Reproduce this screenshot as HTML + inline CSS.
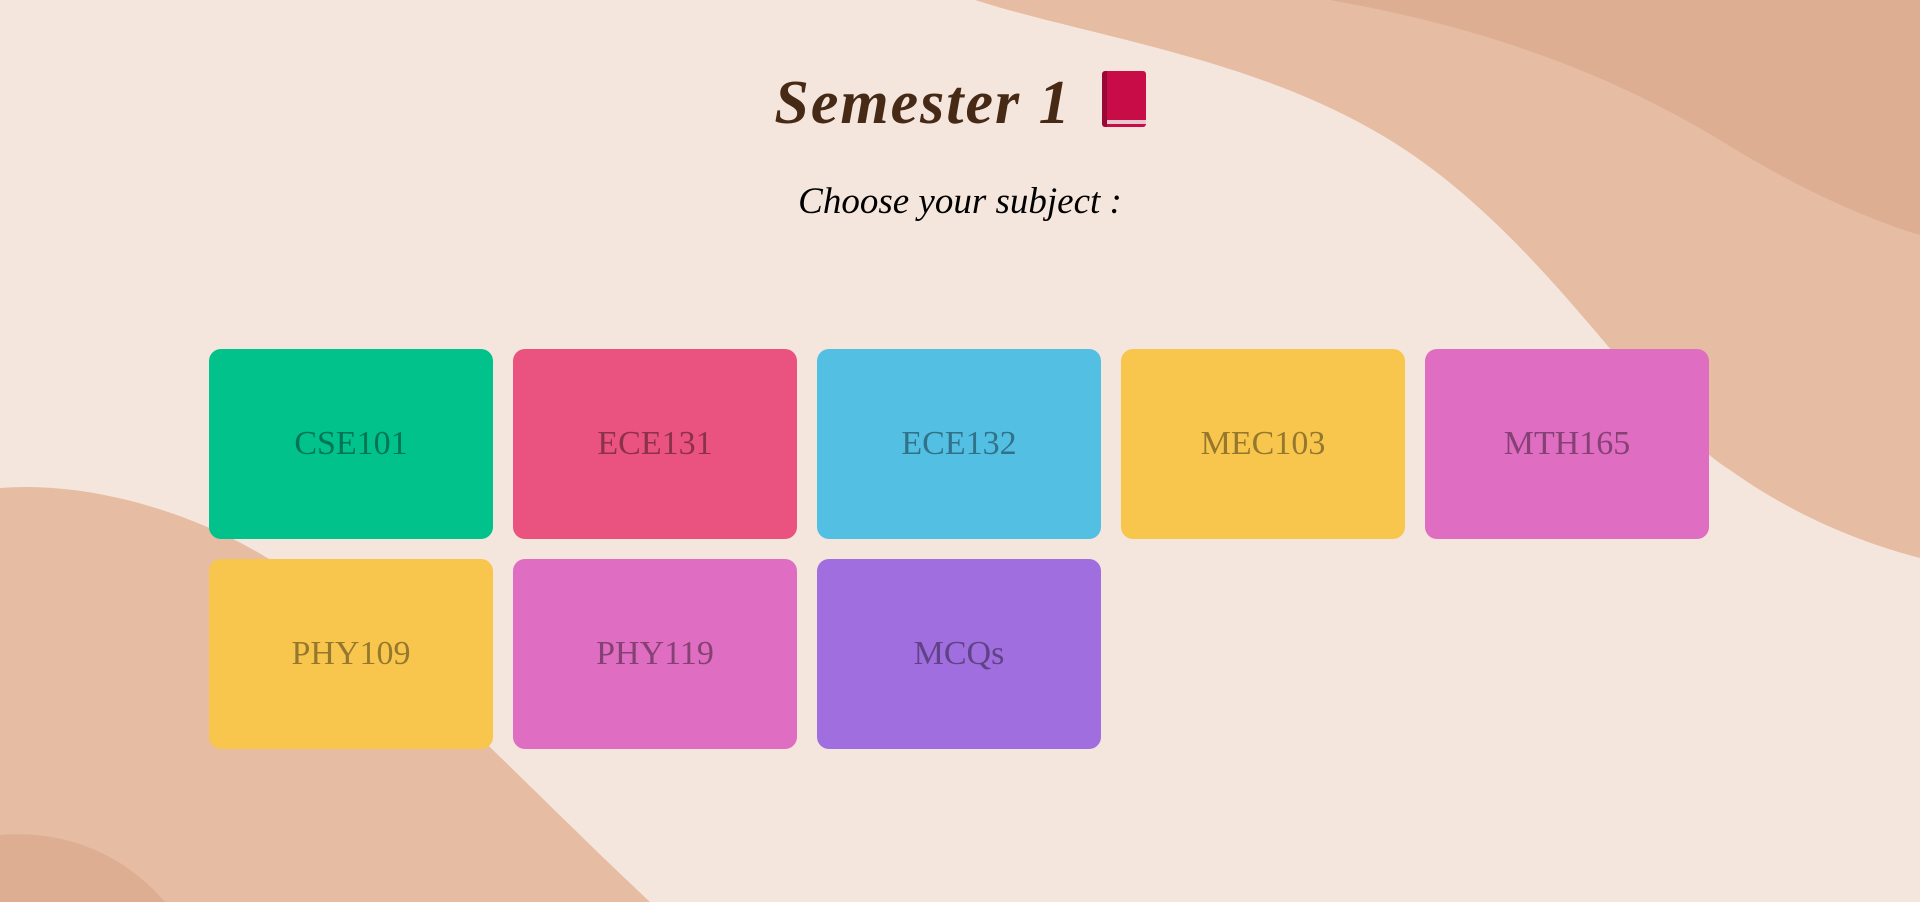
<!DOCTYPE html>
<html><head><meta charset="utf-8"><style>
html,body{margin:0;padding:0;width:1920px;height:902px;overflow:hidden;background:#f5e6dd;}
svg.bg{position:absolute;left:0;top:0;}
h1{position:absolute;left:0;right:0;top:68px;margin:0;text-align:center;font:italic bold 62px "Liberation Serif",serif;color:#472a16;letter-spacing:2px;}
.book{display:inline-block;width:44px;height:56px;background:#c80c48;border-radius:3px;vertical-align:-4px;margin-left:30px;position:relative;border-left:5px solid #9a0838;box-sizing:border-box;}
.book:after{content:"";position:absolute;left:0;right:0;bottom:3px;height:4px;background:#e8c8d0;}
h2{position:absolute;left:0;right:0;top:180px;margin:0;text-align:center;font:italic 37px "Liberation Serif",serif;color:#000;font-weight:normal;}
.c{position:absolute;width:284px;height:190px;border-radius:12px;display:flex;align-items:center;justify-content:center;font:34px "Liberation Serif",serif;color:rgba(0,0,0,.4);}
</style></head><body>
<svg class="bg" width="1920" height="902" viewBox="0 0 1920 902">
<path d="M975 0 C1100 40 1280 60 1420 160 C1560 260 1650 420 1730 470 C1800 520 1870 545 1920 558 L1920 0 Z" fill="#e6bca2"/>
<path d="M1330 0 C1500 30 1620 80 1720 140 C1800 190 1870 220 1920 235 L1920 0 Z" fill="#ddae92"/>
<path d="M0 488 C100 480 220 520 300 580 C420 670 520 780 650 902 L0 902 Z" fill="#e6bca2"/>
<path d="M0 835 C60 830 120 850 165 902 L0 902 Z" fill="#ddae92"/>
</svg>
<h1>Semester 1<span class="book"></span></h1>
<h2>Choose your subject :</h2>
<div class="c" style="left:209px;top:349px;background:#00c28a">CSE101</div>
<div class="c" style="left:513px;top:349px;background:#ea527f">ECE131</div>
<div class="c" style="left:817px;top:349px;background:#53bfe3">ECE132</div>
<div class="c" style="left:1121px;top:349px;background:#f8c64d">MEC103</div>
<div class="c" style="left:1425px;top:349px;background:#df6dc1">MTH165</div>
<div class="c" style="left:209px;top:559px;background:#f8c64d">PHY109</div>
<div class="c" style="left:513px;top:559px;background:#df6dc1">PHY119</div>
<div class="c" style="left:817px;top:559px;background:#a06edf">MCQs</div>
</body></html>
